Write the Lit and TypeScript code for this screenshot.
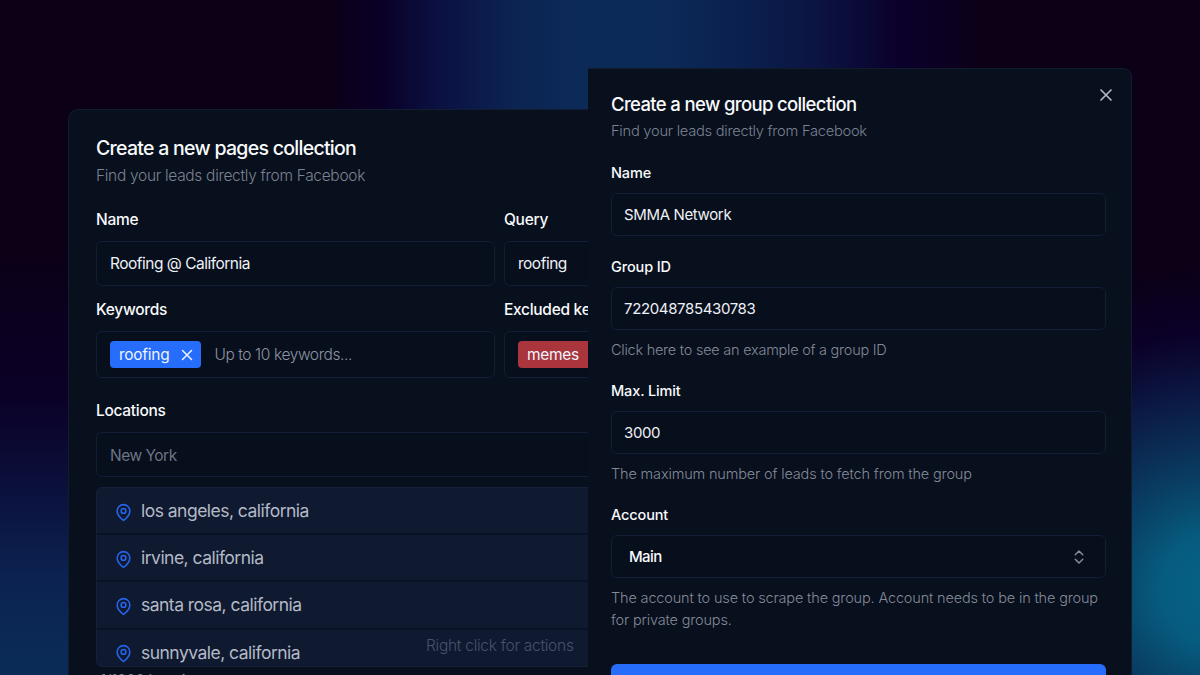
import {LitElement, html, css, svg, nothing} from 'lit';
import {customElement, property} from 'lit/decorators.js';
import {classMap} from 'lit/directives/class-map.js';

interface GroupField {
    label: string;
    value: string;
    help?: string;
    link?: boolean;
    select?: boolean;
}

const LOCATIONS = [
    'los angeles, california',
    'irvine, california',
    'santa rosa, california',
    'sunnyvale, california',
];

const GROUP_FIELDS: GroupField[] = [
    {label: 'Name', value: 'SMMA Network'},
    {label: 'Group ID', value: '722048785430783', help: 'Click here to see an example of a group ID', link: true},
    {label: 'Max. Limit', value: '3000', help: 'The maximum number of leads to fetch from the group'},
    {
        label: 'Account',
        value: 'Main',
        help: 'The account to use to scrape the group. Account needs to be in the group for private groups.',
        select: true,
    },
];

const ICONS = {
    close: svg`<path d="M18 6 6 18M6 6l12 12"/>`,
    pin: svg`<path d="M20 10c0 6-8 12-8 12s-8-6-8-12a8 8 0 0 1 16 0Z"/><circle cx="12" cy="10" r="3"/>`,
    chevrons: svg`<path d="m7 15 5 5 5-5M7 9l5-5 5 5"/>`,
};

@customElement('ui-icon')
export class UiIcon extends LitElement {
    static styles = css`
        :host {
            display: block;
            flex: none;
        }

        svg {
            display: block;
            width: 100%;
            height: 100%;
            fill: none;
            stroke: currentColor;
            stroke-width: 2;
            stroke-linecap: round;
            stroke-linejoin: round;
        }
    `;
    @property() name: keyof typeof ICONS = 'close';

    render() {
        return html`<svg viewBox="0 0 24 24">${ICONS[this.name]}</svg>`;
    }
}

@customElement('pages-dialog')
export class PagesDialog extends LitElement {
    static styles = css`
        :host {
            display: block;
            box-sizing: border-box;
            overflow: hidden;
            border: 1px solid #131d31;
            border-width: 1px 0 0 1px;
            border-top-left-radius: 10px;
            background: #080f1d;
            padding: 24px 0 0 27px;
            color: #eef1f6;
            font-size: 15.5px;
            letter-spacing: -0.5px;
            white-space: nowrap;
        }

        .title {
            margin: 0;
            font-size: 19.5px;
            font-weight: 500;
            line-height: 28px;
            letter-spacing: -0.72px;
            color: #f8fafc;
        }

        .subtitle {
            margin: 2px 0 22px;
            font-weight: 300;
            line-height: 24px;
            letter-spacing: -0.31px;
            color: #7b8291;
        }

        .form {
            display: grid;
            grid-template-columns: 399px 399px;
            column-gap: 9px;
        }

        .label {
            display: block;
            margin-bottom: 11px;
            font-weight: 500;
            line-height: 20px;
            letter-spacing: -0.29px;
            color: #f8fafc;
        }

        .input {
            display: flex;
            align-items: center;
            box-sizing: border-box;
            height: 45px;
            margin-bottom: 14px;
            border: 1px solid #131e36;
            border-radius: 6px;
            background: #070e1c;
            padding: 0 13px;
        }

        .tags {
            height: 47px;
            margin-bottom: 23px;
        }

        .wide {
            grid-column: span 2;
        }

        .wide .input {
            margin-bottom: 10px;
        }

        .tag {
            display: flex;
            align-items: center;
            gap: 9px;
            box-sizing: border-box;
            height: 27px;
            border-radius: 4px;
            background: #266dfb;
            padding: 0 5px 0 9px;
            letter-spacing: -0.28px;
            color: #eef4ff;
        }

        .tag ui-icon {
            width: 18px;
            height: 18px;
        }

        .excluded {
            background: #ab353d;
        }

        .hint {
            margin-left: 13px;
            font-weight: 300;
            letter-spacing: -0.4px;
            color: #8d94a3;
        }

        .placeholder {
            padding-top: 1px;
            color: #6d7483;
        }

        .list {
            position: relative;
            box-sizing: border-box;
            height: 180px;
            overflow: hidden;
            border: 1px solid #141f38;
            border-radius: 6px 0 0 6px;
            background: #0f1930;
        }

        .location {
            display: flex;
            align-items: center;
            gap: 8px;
            box-sizing: border-box;
            height: 47.2px;
            border-bottom: 2px solid #091225;
            padding-left: 17px;
            font-size: 17.5px;
            letter-spacing: -0.52px;
            color: #b3b9c6;
        }

        .location ui-icon {
            width: 19px;
            height: 19px;
            margin-top: 3px;
            color: #2563eb;
        }

        .menu-hint {
            position: absolute;
            left: 329px;
            bottom: 9px;
            font-weight: 300;
            line-height: 22px;
            letter-spacing: -0.27px;
            color: #48526a;
        }

        .count {
            margin-top: 4px;
            padding-left: 4px;
            line-height: 20px;
            color: #7b8291;
        }
    `;

    render() {
        return html`
            <h2 class="title">Create a new pages collection</h2>
            <p class="subtitle">Find your leads directly from Facebook</p>
            <div class="form">
                <div>
                    <span class="label">Name</span>
                    <div class="input">Roofing @ California</div>
                </div>
                <div>
                    <span class="label">Query</span>
                    <div class="input">roofing</div>
                </div>
                <div>
                    <span class="label">Keywords</span>
                    <div class="input tags">
                        <span class="tag">roofing <ui-icon name="close"></ui-icon></span>
                        <span class="hint">Up to 10 keywords...</span>
                    </div>
                </div>
                <div>
                    <span class="label">Excluded keywords</span>
                    <div class="input tags">
                        <span class="tag excluded">memes <ui-icon name="close"></ui-icon></span>
                    </div>
                </div>
                <div class="wide">
                    <span class="label">Locations</span>
                    <div class="input placeholder">New York</div>
                    <div class="list">
                        ${LOCATIONS.map(location => html`
                            <div class="location"><ui-icon name="pin"></ui-icon>${location}</div>
                        `)}
                        <span class="menu-hint">Right click for actions</span>
                    </div>
                    <div class="count">1/1000 locations</div>
                </div>
            </div>
        `;
    }
}

@customElement('group-dialog')
export class GroupDialog extends LitElement {
    static styles = css`
        :host {
            display: block;
            position: relative;
            box-sizing: border-box;
            overflow: hidden;
            border: 1px solid #131d31;
            border-width: 1px 1px 0 0;
            border-top-right-radius: 9px;
            background: #080f1d;
            padding: 22px 25px 0 23px;
            color: #eef1f6;
            font-size: 15px;
            letter-spacing: -0.36px;
        }

        .title {
            margin: 0;
            font-size: 18.5px;
            font-weight: 500;
            line-height: 26px;
            letter-spacing: -0.64px;
            color: #f8fafc;
        }

        .subtitle {
            margin: 3px 0 21px;
            font-size: 14.7px;
            font-weight: 300;
            line-height: 22px;
            letter-spacing: -0.27px;
            color: #7b8291;
        }

        .close {
            position: absolute;
            top: 15.5px;
            right: 15px;
            width: 20px;
            height: 20px;
            color: #b4bac5;
        }

        .field {
            margin-bottom: 20.8px;
        }

        .label {
            display: block;
            margin-bottom: 10px;
            font-size: 14.5px;
            font-weight: 500;
            line-height: 20px;
            letter-spacing: -0.13px;
            color: #f8fafc;
        }

        .input {
            display: flex;
            align-items: center;
            justify-content: space-between;
            box-sizing: border-box;
            height: 43px;
            border: 1px solid #131e36;
            border-radius: 6px;
            background: #070e1c;
            padding: 0 12px;
        }

        .select {
            padding: 0 17px;
            font-weight: 500;
            letter-spacing: -0.6px;
            color: #f8fafc;
        }

        .select ui-icon {
            width: 18px;
            height: 18px;
            color: #858c9a;
        }

        .help {
            margin: 9px 0 0;
            font-size: 14.5px;
            font-weight: 300;
            line-height: 21.5px;
            letter-spacing: -0.16px;
            color: #838a98;
        }

        .link {
            letter-spacing: -0.25px;
        }

        .submit {
            height: 42px;
            margin-top: 34px;
            border-radius: 6px;
            background: #266dfb;
        }
    `;

    render() {
        return html`
            <h2 class="title">Create a new group collection</h2>
            <p class="subtitle">Find your leads directly from Facebook</p>
            <ui-icon class="close" name="close"></ui-icon>
            ${GROUP_FIELDS.map(field => html`
                <div class="field">
                    <span class="label">${field.label}</span>
                    <div class=${classMap({input: true, select: !!field.select})}>
                        ${field.value}
                        ${field.select ? html`<ui-icon name="chevrons"></ui-icon>` : nothing}
                    </div>
                    ${field.help
                            ? html`<p class=${classMap({help: true, link: !!field.link})}>${field.help}</p>`
                            : nothing
                    }
                </div>
            `)}
            <div class="submit"></div>
        `;
    }
}

@customElement('app-root')
export class AppRoot extends LitElement {
    static styles = css`
        :host {
            display: grid;
            grid-template-columns: 520px 544px;
            box-sizing: border-box;
            width: 1200px;
            height: 675px;
            overflow: hidden;
            padding: 68px 68px 0;
            font-family: Inter, 'Liberation Sans', sans-serif;
            background:
                linear-gradient(180deg, #0c001600 240px, #0b0026 390px, #0b0f3a 480px, #0c2250 575px, #0b2b57 660px) left / 68px 100% no-repeat,
                radial-gradient(circle at 1216px 590px, #056387 0, #065c7f 55px, #094065 108px, #0b2850 160px, #0b123d 210px, #0b0027 260px, #0c001600 330px),
                linear-gradient(90deg, #0c0016 325px, #0a0027 382px, #0b1041 435px, #0c2452 515px, #0c2a58 580px, #0c2a58 660px, #0b1f4d 750px, #0b1240 825px, #0b002b 900px, #0c0016 990px);
        }

        pages-dialog {
            margin-top: 41px;
        }
    `;

    render() {
        return html`
            <pages-dialog></pages-dialog>
            <group-dialog></group-dialog>
        `;
    }
}
